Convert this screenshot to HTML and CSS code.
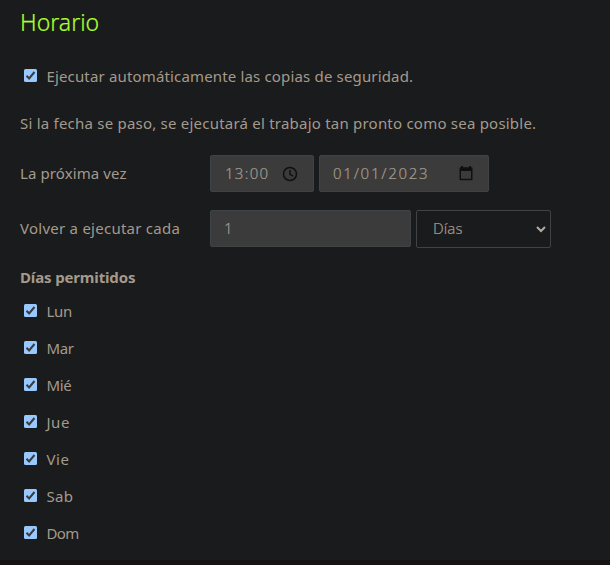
FILE: index.html
```html
<!DOCTYPE html>
<html lang="es">
<head>
<meta charset="utf-8">
<title>Horario</title>
<link rel="stylesheet" href="styles.css">
</head>
<body>
<svg class="defs" aria-hidden="true"><symbol id="check" viewBox="0 0 13 13"><rect width="13" height="13" rx="1.5" fill="#99c8ff"/><path d="M2.5 6.8 5.1 9.4 10.5 3" fill="none" stroke="#3b3b3b" stroke-width="2"/></symbol></svg>
<main>
  <h2><span class="title">Horario</span></h2>
  <label class="check auto"><svg><use href="#check"/></svg><span>Ejecutar automáticamente las copias de seguridad.</span></label>
  <p><span class="note">Si la fecha se paso, se ejecutará el trabajo tan pronto como sea posible.</span></p>
  <div class="row">
    <span class="name"><span class="next">La próxima vez</span></span>
    <div class="field time"><span class="clock-text">13:00</span>
      <svg class="clock" viewBox="0 0 16 16" fill="none" stroke="#101010" stroke-width="1.5"><circle cx="8" cy="8" r="6.5"/><path d="M8 4v4.3l3 1.8"/></svg>
    </div>
    <div class="field date"><span class="date-text">01/01/2023</span>
      <svg class="calendar" viewBox="0 0 14 15"><path d="M2 0h2v1.2h6V0h2v1.2h.5q1 0 1 1v11q0 1-1 1h-11q-1 0-1-1v-11q0-1 1-1H2zM2 5v7.8h10V5z" fill="#101010" fill-rule="evenodd"/></svg>
    </div>
  </div>
  <div class="row repeat">
    <span class="name"><span class="again">Volver a ejecutar cada</span></span>
    <div class="field count"><span>1</span></div>
    <div class="field select"><span class="unit">Días</span>
      <svg class="arrow" viewBox="0 0 10 7"><path d="m1 1 4 4 4-4" fill="none" stroke="#b2aca2" stroke-width="2"/></svg>
    </div>
  </div>
  <h3><span class="allowed">Días permitidos</span></h3>
  <div class="days">
    <label class="check"><svg><use href="#check"/></svg><span>Lun</span></label>
    <label class="check"><svg><use href="#check"/></svg><span>Mar</span></label>
    <label class="check"><svg><use href="#check"/></svg><span>Mié</span></label>
    <label class="check"><svg><use href="#check"/></svg><span class="wide">Jue</span></label>
    <label class="check"><svg><use href="#check"/></svg><span class="wide">Vie</span></label>
    <label class="check"><svg><use href="#check"/></svg><span class="sab">Sab</span></label>
    <label class="check"><svg><use href="#check"/></svg><span class="dom">Dom</span></label>
  </div>
</main>
</body>
</html>
```
FILE: styles.css
```css
* { box-sizing: border-box; }
body { margin: 0; background: #1a1b1c; color: #a49a8c; font: 15px/22px "Noto Sans", sans-serif; overflow: hidden; }
.defs { display: block; width: 0; height: 0; }
main { height: 565px; padding: 6px 20px 0; border-bottom: 5px solid #171314; }
h2 { margin: 0; font-size: 23px; font-weight: 300; line-height: 32px; color: #adff2f; }
.title { -webkit-text-stroke: .2px; }
.check { display: flex; height: 37px; align-items: center; padding-left: 4px; }
.check svg { width: 13px; height: 13px; margin-right: 9.4px; }
.auto { margin-top: 19px; letter-spacing: .16px; }
p { margin: 18px 0 0; line-height: 22px; }
.note { letter-spacing: .22px; }
.row { display: flex; align-items: center; height: 37px; margin-top: 21px; }
.name { width: 190px; flex: none; padding-bottom: 2px; }
.next { letter-spacing: .1px; }
.again { letter-spacing: .25px; }
.repeat { height: 38px; margin-top: 18px; }
.field { height: 37px; display: flex; align-items: center; background: #3b3b3b; border: 1px solid #3e4446; border-radius: 2px; padding-left: 14px; font-weight: 300; margin-right: 5px; white-space: nowrap; }
.field span { padding-bottom: 2px; -webkit-text-stroke: .2px; }
.clock-text { letter-spacing: 1.3px; }
.date-text { letter-spacing: 1.75px; }
.unit { letter-spacing: .1px; }
.time { width: 104px; }
.date { width: 170px; padding-left: 13px; }
.count { width: 201px; padding-left: 13px; align-self: flex-start; }
.select { width: 135px; height: 38px; padding-left: 16px; background: #1a1b1c; }
.field svg { margin-left: auto; }
.clock { width: 16px; height: 16px; margin-right: 15px; }
.calendar { width: 14px; height: 15px; margin-right: 15px; }
.arrow { width: 10px; height: 7px; margin-right: 4px; }
h3 { margin: 18px 0 4px; font-size: 15px; line-height: 22px; }
.allowed { letter-spacing: -.15px; }
.days { letter-spacing: -.3px; }
.wide { letter-spacing: .6px; }
.sab { letter-spacing: .3px; }
.dom { letter-spacing: -.6px; }
.check span { padding-top: 1px; }
```
